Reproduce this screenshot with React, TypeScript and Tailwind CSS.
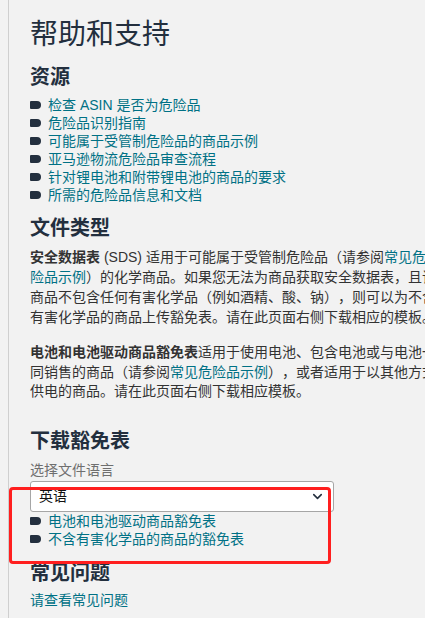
import React from "react";
import { ChevronDown } from "lucide-react";

const resources = [
  "检查 ASIN 是否为危险品",
  "危险品识别指南",
  "可能属于受管制危险品的商品示例",
  "亚马逊物流危险品审查流程",
  "针对锂电池和附带锂电池的商品的要求",
  "所需的危险品信息和文档",
];

const templates = ["电池和电池驱动商品豁免表", "不含有害化学品的商品的豁免表"];

function Bullet() {
  return <span className="inline-block w-[11px] h-[8px] bg-[#232f3e] rounded-[1px_4px_4px_1px] mr-[7px] shrink-0" />;
}

function LinkList({ items }: { items: string[] }) {
  return (
    <ul className="flex flex-col">
      {items.map((item) => (
        <li key={item} className="flex items-center leading-[18px] text-[14px] whitespace-nowrap">
          <Bullet />
          <a className="text-[#007185]">{item}</a>
        </li>
      ))}
    </ul>
  );
}

export default function App() {
  return (
    <div
      className="relative h-[618px] w-[425px] overflow-hidden bg-[#f2f2f2] [text-spacing-trim:space-all]"
      style={{ fontFamily: '"Liberation Sans", "Noto Sans CJK SC", sans-serif' }}
    >
      <div className="ml-[8px] h-full border-l border-[#cfcfcf] pl-[21px] pt-[17px]">
        <div className="w-[408px] text-[#333]">
          <h1 className="text-[28px] leading-[36px] font-normal text-[#232f3e]">帮助和支持</h1>

          <h2 className="mt-[10px] text-[20px] leading-[28px] font-bold text-[#232f3e]">资源</h2>
          <div className="mt-[5px]">
            <LinkList items={resources} />
          </div>

          <h2 className="mt-[10px] text-[20px] leading-[28px] font-bold text-[#232f3e]">文件类型</h2>
          <p className="mt-[5px] text-[14px] leading-[20px]">
            <b>安全数据表</b> (SDS) 适用于可能属于受管制危险品（请参阅
            <a className="text-[#007185]">常见危险品示例</a>
            ）的化学商品。如果您无法为商品获取安全数据表，且该商品不包含任何有害化学品（例如酒精、酸、钠），则可以为不含有害化学品的商品上传豁免表。请在此页面右侧下载相应的模板。
          </p>
          <p className="mt-[16px] text-[14px] leading-[19.5px]">
            <b>电池和电池驱动商品豁免表</b>
            适用于使用电池、包含电池或与电池一同销售的商品（请参阅
            <a className="text-[#007185]">常见危险品示例</a>
            ），或者适用于以其他方式供电的商品。请在此页面右侧下载相应模板。
          </p>

          <h2 className="mt-[25px] text-[20px] leading-[28px] font-bold text-[#232f3e]">下载豁免表</h2>
          <div className="mt-[5px] text-[14px] leading-[20px] text-[#6f6f6f]">选择文件语言</div>
          <div className="mt-[1px] flex h-[31px] w-[304px] items-center justify-between rounded-[3px] border border-[#a6a6a6] bg-white pl-[8px] pr-[8px] text-[14px] text-[#111]">
            <span>英语</span>
            <ChevronDown size={15} strokeWidth={2.5} className="text-[#232f3e]" />
          </div>
          <LinkList items={templates} />

          <h2 className="mt-[11px] text-[20px] leading-[28px] font-bold text-[#232f3e]">常见问题</h2>
          <a className="mt-[3px] block text-[14px] leading-[20px] text-[#007185]">请查看常见问题</a>
        </div>
      </div>

      {/* annotation box */}
      <div className="absolute left-[9px] top-[487px] h-[77px] w-[322px] rounded-[4px] border-[3px] border-[#ff1f1f]" />
    </div>
  );
}
